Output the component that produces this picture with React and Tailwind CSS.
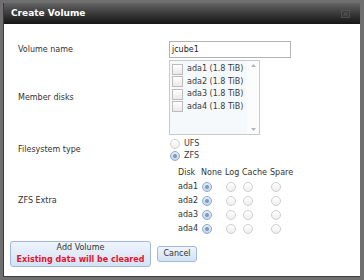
import React from 'react';

const disks = ['ada1', 'ada2', 'ada3', 'ada4'];

const Radio = ({ checked, faint }) => (
  <span
    className={
      'inline-flex items-center justify-center w-[10px] h-[10px] rounded-full border ' +
      (checked
        ? 'border-[#8ea9c9] bg-gradient-to-b from-[#e4edf7] to-[#c4d6ea]'
        : faint
        ? 'border-[#cfcfcf] bg-gradient-to-b from-white to-[#eeeeee]'
        : 'border-[#bdbdbd] bg-gradient-to-b from-white to-[#e6e6e6]')
    }
  >
    {checked && <span className="w-[4px] h-[4px] rounded-full bg-[#7d98bb]" />}
  </span>
);

const Checkbox = () => (
  <span className="inline-block w-[11px] h-[11px] border border-[#bcbcbc] bg-gradient-to-b from-white to-[#e9e9e9]" />
);

const FormRow = ({ label, children }) => (
  <div className="flex items-center">
    <div className="w-[159px] pl-[8px] text-[#333]">{label}</div>
    <div>{children}</div>
  </div>
);

export default function App() {
  return (
    <div
      className="w-[364px] h-[280px] bg-[#6f6f6f] p-[3px] pr-[4px] text-[8px] leading-none"
      style={{ fontFamily: '"DejaVu Sans", Verdana, sans-serif' }}
    >
      <div className="flex flex-col h-full border-l border-b border-[#3c3c3c]">
        {/* title bar */}
        <div className="h-[21px] flex items-center justify-between pl-[7px] pr-[10px] bg-gradient-to-b from-[#646464] to-[#161616]">
          <span className="text-white font-bold text-[9px]">Create Volume</span>
          <svg width="9" height="8" viewBox="0 0 9 8" className="opacity-70">
            <rect x="0.5" y="0.5" width="8" height="7" fill="#3a3a3a" stroke="#5c5c5c" />
            <path d="M2.5 2l4 4M6.5 2l-4 4" stroke="#6e6e6e" strokeWidth="1" />
          </svg>
        </div>

        {/* body */}
        <div className="flex-1 bg-white pl-[6px] pt-[17px] flex flex-col">
          <FormRow label="Volume name">
            <div className="w-[122px] h-[17px] border border-[#b3b3b3] flex items-center pl-[2px] text-[#222]">
              jcube1
            </div>
          </FormRow>

          <div className="mt-[2px]">
            <FormRow label="Member disks">
              <div className="w-[91px] h-[75px] border border-[#c9c9c9] bg-[#f6f9fc] flex">
                <div className="flex-1 pt-[2px] pl-[2px]">
                  {disks.map(d => (
                    <div key={d} className="h-[12.5px] flex items-center gap-[4px] text-[#3a3a3a]">
                      <Checkbox />
                      <span>{d} (1.8 TiB)</span>
                    </div>
                  ))}
                </div>
                <div className="w-[12px] flex flex-col justify-between items-center py-[3px] bg-[#fbfcfd]">
                  <svg width="5" height="3" viewBox="0 0 5 3">
                    <path d="M0 3L2.5 0L5 3z" fill="#b4b4b4" />
                  </svg>
                  <svg width="5" height="3" viewBox="0 0 5 3">
                    <path d="M0 0L2.5 3L5 0z" fill="#b4b4b4" />
                  </svg>
                </div>
              </div>
            </FormRow>
          </div>

          <div className="mt-[2px]">
            <FormRow label="Filesystem type">
              <div className="pl-[1px]">
                <div className="h-[13px] flex items-center gap-[4px] text-[#3a3a3a]">
                  <Radio faint />
                  <span>UFS</span>
                </div>
                <div className="h-[12px] flex items-center gap-[4px] text-[#3a3a3a]">
                  <Radio checked />
                  <span>ZFS</span>
                </div>
              </div>
            </FormRow>
          </div>

          <div className="mt-[4px]">
            <FormRow label="ZFS Extra">
              <div className="pl-[9px] grid grid-cols-[23px_24px_17px_28px_24px] auto-rows-[14px] items-center text-[#333]">
                <span>Disk</span>
                <span>None</span>
                <span>Log</span>
                <span>Cache</span>
                <span>Spare</span>
                {disks.map(d => (
                  <React.Fragment key={d}>
                    <span>{d}</span>
                    <span className="pl-[1px] flex"><Radio checked /></span>
                    <span className="pl-[1px] flex"><Radio faint /></span>
                    <span className="pl-[1px] flex"><Radio faint /></span>
                    <span className="pl-[1px] flex"><Radio faint /></span>
                  </React.Fragment>
                ))}
              </div>
            </FormRow>
          </div>

          <div className="mt-[5px] flex items-center gap-[6px]">
            <button
              type="button"
              className="w-[141px] h-[26px] rounded-[3px] border border-[#9fb9d6] bg-gradient-to-b from-[#eef4fb] to-[#d3e3f4] flex flex-col items-center justify-center gap-[4px]"
            >
              <span className="text-[#333]">Add Volume</span>
              <span className="text-[#e5142e] font-bold">Existing data will be cleared</span>
            </button>
            <button
              type="button"
              className="w-[40px] h-[16px] rounded-[3px] border border-[#9fb9d6] bg-gradient-to-b from-[#eef4fb] to-[#d3e3f4] text-[#333]"
            >
              Cancel
            </button>
          </div>
        </div>
      </div>
    </div>
  );
}
